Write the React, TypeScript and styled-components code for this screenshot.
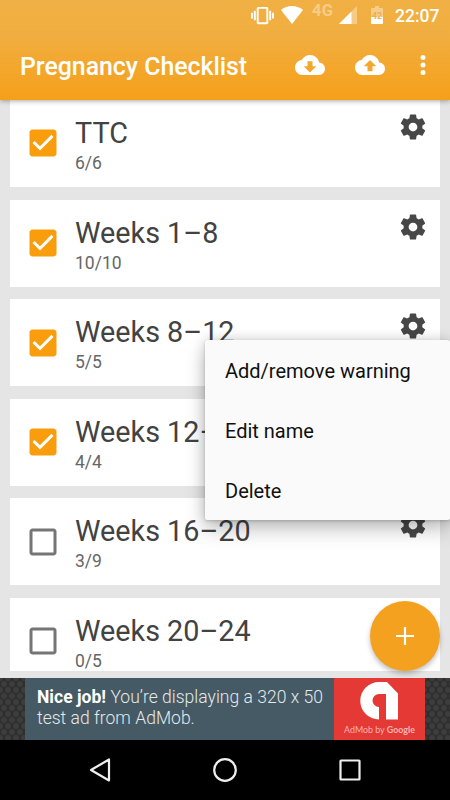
import React from "react";
import styled, { createGlobalStyle } from "styled-components";

const Global = createGlobalStyle`
  *, *::before, *::after { box-sizing: border-box; }
  html, body { margin: 0; padding: 0; }
  body { font-family: Roboto, "Noto Sans", sans-serif; }
`;

const Screen = styled.div`
  position: relative;
  width: 450px;
  height: 800px;
  overflow: hidden;
  display: flex;
  flex-direction: column;
  background: #e5e5e5;
`;

const Header = styled.header`
  flex: none;
  height: 100px;
  z-index: 1;
  color: #fff;
  background: linear-gradient(#f1b044 0%, #f1ae40 35%, #f5a019 100%);
  box-shadow: 0 1px 5px rgba(0, 0, 0, 0.35);
`;

const StatusBar = styled.div`
  height: 30px;
  display: flex;
  align-items: center;
  justify-content: flex-end;
  padding-right: 10px;
`;

const StatusIcon = styled.svg<{ $gap: number }>`
  flex: none;
  display: block;
  margin-right: ${(p) => p.$gap}px;
  fill: #fff;
`;

const Network = styled.span`
  width: 22px;
  height: 26px;
  margin-right: 5px;
  font-size: 16.5px;
  line-height: 18px;
  font-weight: 700;
  letter-spacing: 0.3px;
  color: rgba(255, 255, 255, 0.38);
`;

const Clock = styled.span`
  width: 45px;
  padding-top: 1px;
  font-size: 17.5px;
  line-height: 30px;
  font-weight: 500;
  white-space: nowrap;
`;

const Toolbar = styled.div`
  height: 70px;
  display: flex;
  align-items: center;
  padding: 0 12.5px 0 20px;
`;

const Title = styled.h1`
  flex: 1;
  margin: 3px 0 0;
  font-size: 24.85px;
  line-height: 30px;
  font-weight: 500;
  white-space: nowrap;
`;

const ToolbarIcon = styled.svg<{ $gap?: number }>`
  flex: none;
  width: 30px;
  height: 30px;
  margin-right: ${(p) => p.$gap ?? 0}px;
  fill: #fff;
`;

const List = styled.main`
  flex: none;
  height: 571px;
  overflow: hidden;
  padding: 0 10px;
  display: flex;
  flex-direction: column;
  gap: 12.6px;
`;

const Card = styled.section`
  flex: none;
  height: 87px;
  display: flex;
  align-items: flex-start;
  padding: 0 12px 0 14.5px;
  background: #fff;
  color: #424242;
`;

const Check = styled.svg<{ $on: boolean }>`
  flex: none;
  width: 36px;
  height: 36px;
  margin: 25.4px 14.5px 0 0;
  fill: ${(p) => (p.$on ? "#f99d0d" : "#757575")};
`;

const Labels = styled.div`
  flex: 1;
  padding-top: 15px;
`;

const Name = styled.div`
  font-size: 28.75px;
  line-height: 36px;
  white-space: nowrap;
`;

const Count = styled.div`
  font-size: 17.5px;
  line-height: 25px;
  color: #666;
`;

const Gear = styled.svg`
  flex: none;
  width: 30px;
  height: 30px;
  margin-top: 12px;
  fill: #474747;
`;

const Menu = styled.nav`
  position: absolute;
  z-index: 3;
  left: 205px;
  top: 340px;
  width: 245px;
  height: 180px;
  border-radius: 2.5px;
  background: #fafafa;
  box-shadow: 0 10px 20px rgba(0, 0, 0, 0.22), 0 0 14px rgba(0, 0, 0, 0.16), 0 1px 3px rgba(0, 0, 0, 0.16);
`;

const MenuItem = styled.div`
  height: 60px;
  padding: 0 20px;
  font-size: 20px;
  line-height: 63px;
  color: #101010;
  white-space: nowrap;
`;

const Fab = styled.button`
  position: absolute;
  z-index: 2;
  left: 370px;
  top: 601px;
  width: 70px;
  height: 70px;
  padding: 0;
  border: 0;
  border-radius: 50%;
  display: grid;
  place-items: center;
  background: #f4a11f;
  box-shadow: 0 3px 5px rgba(0, 0, 0, 0.25);
`;

const Ad = styled.aside`
  flex: none;
  margin-top: 7px;
  height: 62px;
  display: flex;
  padding: 0 25px;
  background-color: #2d2d2d;
  background-image: radial-gradient(circle, #3d3d3d 32%, transparent 52%), radial-gradient(circle, #3d3d3d 32%, transparent 52%);
  background-size: 8px 12px;
  background-position: 0 0, 4px 6px;
`;

const AdText = styled.p`
  width: 309px;
  margin: 0;
  padding: 9px 0 0 12px;
  background: #465a65;
  color: #e4e9eb;
  font-size: 17.5px;
  line-height: 21px;
  letter-spacing: 0.02px;
  font-weight: 300;
  white-space: nowrap;
`;

const AdStrong = styled.b`
  font-weight: 700;
  color: #fff;
`;

const AdLogo = styled.div`
  width: 91px;
  display: flex;
  flex-direction: column;
  align-items: center;
  background: #e53935;
`;

const AdMark = styled.svg`
  flex: none;
  margin: 4px 0 0 -1px;
`;

const AdCaption = styled.span`
  font-family: Lato, sans-serif;
  font-size: 8.9px;
  line-height: 12px;
  margin-top: 4px;
  color: #f7b5b2;
  white-space: nowrap;
  b { font-weight: 700; }
`;

const NavBar = styled.footer`
  flex: none;
  height: 60px;
  display: flex;
  justify-content: center;
  align-items: center;
  gap: 95px;
  background: #000;
`;

const NavIcon = styled.svg`
  width: 30px;
  height: 30px;
  fill: none;
  stroke: #eee;
  stroke-width: 2.2;
  stroke-linejoin: round;
`;

const CLOUD = "M19.35 10.04C18.67 6.59 15.64 4 12 4 9.11 4 6.6 5.64 5.35 8.04 2.34 8.36 0 10.91 0 14c0 3.31 2.69 6 6 6h13c2.76 0 5-2.24 5-5 0-2.64-2.05-4.78-4.65-4.96z";
const GEAR = "M19.43 12.98c.04-.32.07-.64.07-.98s-.03-.66-.07-.98l2.11-1.65c.19-.15.24-.42.12-.64l-2-3.46c-.12-.22-.39-.3-.61-.22l-2.49 1c-.52-.4-1.08-.73-1.69-.98l-.38-2.65C14.46 2.18 14.25 2 14 2h-4c-.25 0-.46.18-.49.42l-.38 2.65c-.61.25-1.17.59-1.69.98l-2.49-1c-.23-.09-.49 0-.61.22l-2 3.46c-.13.22-.07.49.12.64l2.11 1.65c-.04.32-.07.65-.07.98s.03.66.07.98l-2.11 1.65c-.19.15-.24.42-.12.64l2 3.46c.12.22.39.3.61.22l2.49-1c.52.4 1.08.73 1.69.98l.38 2.65c.03.24.24.42.49.42h4c.25 0 .46-.18.49-.42l.38-2.65c.61-.25 1.17-.59 1.69-.98l2.49 1c.23.09.49 0 .61-.22l2-3.46c.12-.22.07-.49-.12-.64l-2.11-1.65zM12 15.5c-1.93 0-3.5-1.57-3.5-3.5s1.57-3.5 3.5-3.5 3.5 1.57 3.5 3.5-1.57 3.5-3.5 3.5z";
const CHECKED = "M19 3H5c-1.11 0-2 .9-2 2v14c0 1.1.89 2 2 2h14c1.11 0 2-.9 2-2V5c0-1.1-.89-2-2-2zm-9 14l-5-5 1.41-1.41L10 14.17l7.59-7.59L19 8l-9 9z";
const UNCHECKED = "M19 5v14H5V5h14m0-2H5c-1.1 0-2 .9-2 2v14c0 1.1.9 2 2 2h14c1.1 0 2-.9 2-2V5c0-1.1-.9-2-2-2z";

const items = [
  { name: "TTC", count: "6/6", done: true },
  { name: "Weeks 1–8", count: "10/10", done: true },
  { name: "Weeks 8–12", count: "5/5", done: true },
  { name: "Weeks 12–", count: "4/4", done: true },
  { name: "Weeks 16–20", count: "3/9", done: false },
  { name: "Weeks 20–24", count: "0/5", done: false },
];

export default function App() {
  return (
    <>
      <Global />
      <Screen>
        <Header>
          <StatusBar>
            <StatusIcon $gap={7} width="23" height="23" viewBox="0 0 24 24">
              <path d="M0 15h2V9H0v6zm3 2h2V7H3v10zm19-8v6h2V9h-2zm-3 8h2V7h-2v10zM16.5 3h-9C6.67 3 6 3.67 6 4.5v15c0 .83.67 1.5 1.5 1.5h9c.83 0 1.5-.67 1.5-1.5v-15c0-.83-.67-1.5-1.5-1.5zM16 19H8V5h8v14z" />
            </StatusIcon>
            <StatusIcon $gap={9} width="22" height="18" viewBox="0 0 22 18">
              <path d="M11 18 0 4Q4.8 0 11 0T22 4Z" />
            </StatusIcon>
            <Network>4G</Network>
            <StatusIcon $gap={14} width="18" height="18" viewBox="0 0 18 18">
              <path d="M0 18 18 0v18Z" opacity=".35" />
              <path d="M0 18 12.5 5.5V18Z" />
            </StatusIcon>
            <StatusIcon $gap={12} width="12" height="18" viewBox="0 0 12 18">
              <path d="M1 2h3V0h4v2h3q1 0 1 1v8H0V3q0-1 1-1Z" opacity=".38" />
              <path d="M0 11h12v6q0 1-1 1H1q-1 0-1-1Z" />
              <text x="6" y="12.5" fontSize="8.5" fontWeight="700" textAnchor="middle" fill="#efae49">42</text>
            </StatusIcon>
            <Clock>22:07</Clock>
          </StatusBar>
          <Toolbar>
            <Title>Pregnancy Checklist</Title>
            <ToolbarIcon $gap={30} viewBox="0 0 24 24">
              <path fillRule="evenodd" d={CLOUD + "M17 13l-5 5-5-5h3V9h4v4h3z"} />
            </ToolbarIcon>
            <ToolbarIcon $gap={22.5} viewBox="0 0 24 24">
              <path fillRule="evenodd" d={CLOUD + "M14 13v4h-4v-4H7l5-5 5 5h-3z"} />
            </ToolbarIcon>
            <ToolbarIcon viewBox="0 0 24 24">
              <circle cx="12" cy="6" r="2" />
              <circle cx="12" cy="12" r="2" />
              <circle cx="12" cy="18" r="2" />
            </ToolbarIcon>
          </Toolbar>
        </Header>
        <List>
          {items.map((item) => (
            <Card key={item.name}>
              <Check $on={item.done} viewBox="0 0 24 24">
                <path d={item.done ? CHECKED : UNCHECKED} />
              </Check>
              <Labels>
                <Name>{item.name}</Name>
                <Count>{item.count}</Count>
              </Labels>
              <Gear viewBox="0 0 24 24">
                <path d={GEAR} />
              </Gear>
            </Card>
          ))}
        </List>
        <Ad>
          <AdText>
            <AdStrong>Nice job!</AdStrong> You’re displaying a 320 x 50
            <br />
            test ad from AdMob.
          </AdText>
          <AdLogo>
            <AdMark width="38" height="38" viewBox="0 0 38 38">
              <path fill="#fff" d="M19 0h8l11 11.5V37.5H26V12H19a6.5 6.5 0 0 0 0 13V37.5A18.7 18.7 0 0 1 19 0Z" />
            </AdMark>
            <AdCaption>AdMob by <b>Google</b></AdCaption>
          </AdLogo>
        </Ad>
        <NavBar>
          <NavIcon viewBox="0 0 30 30"><path d="M6 15 24 4.5v21Z" /></NavIcon>
          <NavIcon viewBox="0 0 30 30"><circle cx="15" cy="15" r="10.8" /></NavIcon>
          <NavIcon viewBox="0 0 30 30"><rect x="5.5" y="5.5" width="19" height="19" rx="0.5" /></NavIcon>
        </NavBar>
        <Menu>
          <MenuItem>Add/remove warning</MenuItem>
          <MenuItem>Edit name</MenuItem>
          <MenuItem>Delete</MenuItem>
        </Menu>
        <Fab aria-label="Add">
          <svg width="18" height="18" viewBox="0 0 18 18" stroke="#fff" strokeWidth="2.2">
            <path d="M9 0v18M0 9h18" />
          </svg>
        </Fab>
      </Screen>
    </>
  );
}
